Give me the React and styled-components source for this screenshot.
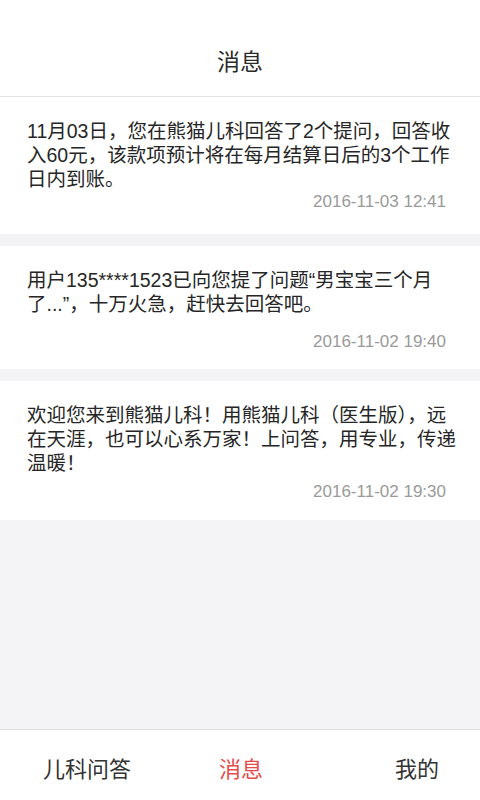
import React from 'react'
import styled, { createGlobalStyle } from 'styled-components'

const GlobalStyle = createGlobalStyle`
  html, body {
    margin: 0;
    padding: 0;
    height: 100%;
  }
  body {
    font-family: "Liberation Sans", "Noto Sans CJK SC", sans-serif;
    background: #f4f4f6;
  }
  #root {
    height: 100%;
  }
  * {
    box-sizing: border-box;
  }
`

const Screen = styled.div`
  display: flex;
  flex-direction: column;
  height: 800px;
  width: 480px;
  background: #f4f4f6;
`

const Header = styled.header`
  height: 97px;
  flex-shrink: 0;
  display: flex;
  align-items: center;
  justify-content: center;
  padding-top: 23px;
  background: #fff;
  border-bottom: 1px solid #e6e6e8;
  font-size: 23px;
  color: #2b2b2b;
`

const List = styled.main`
  flex: 1;
  display: flex;
  flex-direction: column;
  gap: 12px;
`

const Card = styled.section`
  background: #fff;
  padding: 22px 21px ${({ $bottom }) => $bottom}px 27px;
  display: flex;
  flex-direction: column;
`

const Body = styled.p`
  margin: 0;
  font-size: 19.5px;
  line-height: 24px;
  color: #262626;
`

const Time = styled.span`
  align-self: flex-end;
  margin-top: ${({ $gap }) => $gap}px;
  margin-right: 13px;
  font-size: 17px;
  line-height: 20px;
  color: #9a9a9a;
`

const TabBar = styled.nav`
  height: 71px;
  flex-shrink: 0;
  display: grid;
  grid-template-columns: 1fr 1fr 1fr;
  align-items: center;
  padding: 4px 41px 0 43px;
  background: #fff;
  border-top: 1px solid #e2e2e4;
`

const Tab = styled.span`
  font-size: 22px;
  color: ${({ $active }) => ($active ? '#e54b4b' : '#333')};
  justify-self: ${({ $align }) => $align};
`

const messages = [
  {
    text: '11月03日，您在熊猫儿科回答了2个提问，回答收入60元，该款项预计将在每月结算日后的3个工作日内到账。',
    time: '2016-11-03 12:41',
    gap: 1,
    bottom: 22,
  },
  {
    text: '用户135****1523已向您提了问题“男宝宝三个月了...”，十万火急，赶快去回答吧。',
    time: '2016-11-02 19:40',
    gap: 16,
    bottom: 17,
  },
  {
    text: '欢迎您来到熊猫儿科！用熊猫儿科（医生版），远在天涯，也可以心系万家！上问答，用专业，传递温暖！',
    time: '2016-11-02 19:30',
    gap: 7,
    bottom: 18,
  },
]

export default function App() {
  return (
    <>
      <GlobalStyle />
      <Screen>
        <Header>消息</Header>
        <List>
          {messages.map((m) => (
            <Card key={m.time} $bottom={m.bottom}>
              <Body>{m.text}</Body>
              <Time $gap={m.gap}>{m.time}</Time>
            </Card>
          ))}
        </List>
        <TabBar>
          <Tab $align="start">儿科问答</Tab>
          <Tab $align="center" $active>消息</Tab>
          <Tab $align="end">我的</Tab>
        </TabBar>
      </Screen>
    </>
  )
}
